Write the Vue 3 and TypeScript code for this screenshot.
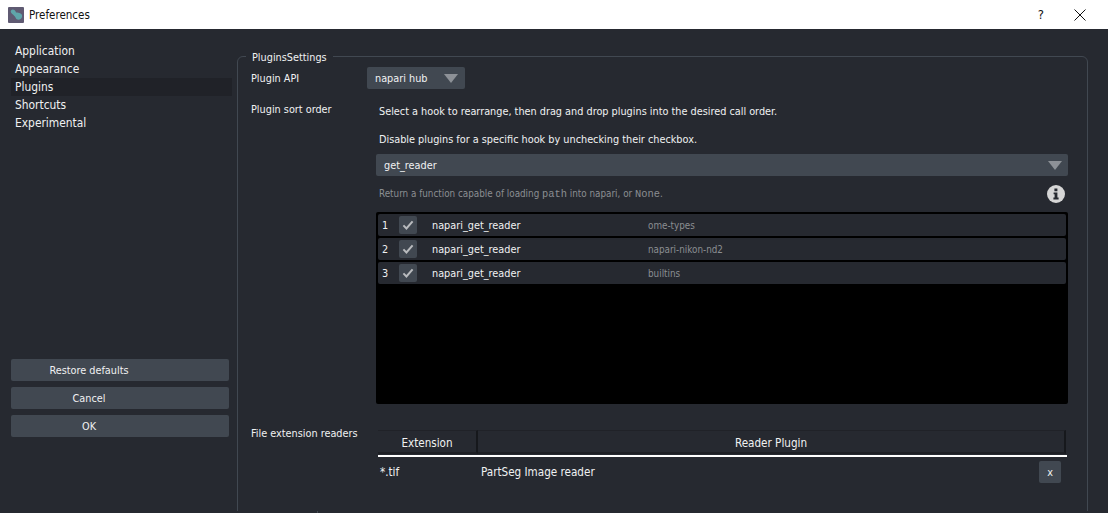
<script setup lang="ts">
const nav = ['Application', 'Appearance', 'Plugins', 'Shortcuts', 'Experimental']
const actions = ['Restore defaults', 'Cancel', 'OK']
const hooks = [
  { n: 1, plugin: 'ome-types' },
  { n: 2, plugin: 'napari-nikon-nd2' },
  { n: 3, plugin: 'builtins' }
]
</script>

<template>
  <div class="window">
    <header class="titlebar">
      <svg class="appicon" width="16" height="16" viewBox="0 0 16 16">
        <rect width="16" height="16" rx="1" fill="#5f5a72" />
        <path d="M3 3.5 C4.5 1.5 7.5 3 8 5.5 C11 5.5 15 6.5 14 10 C13 13.5 8.5 13.5 7.5 10.5 C6.5 8 1.5 6 3 3.5Z" fill="#5fa5aa" />
      </svg>
      <span class="wintitle">Preferences</span>
      <span class="help">?</span>
      <svg class="close" width="12" height="12" viewBox="0 0 12 12">
        <path d="M.5.5l11 11M11.5.5l-11 11" stroke="#111" stroke-width="1" fill="none" />
      </svg>
    </header>
    <div class="content">
      <aside class="sidebar">
        <ul class="nav">
          <li v-for="item in nav" :key="item" :class="{ active: item === 'Plugins' }">{{ item }}</li>
        </ul>
        <div class="actions">
          <button v-for="a in actions" :key="a" class="btn">{{ a }}</button>
        </div>
      </aside>
      <main class="main">
        <fieldset class="group">
          <legend>PluginsSettings</legend>
          <div class="row-api">
            <span class="label">Plugin API</span>
            <div class="combo small">
              <span class="combo-text">napari hub</span>
              <i class="arrow"></i>
            </div>
          </div>
          <div class="row-sort">
            <span class="label sort-label">Plugin sort order</span>
            <div class="sort-body">
              <p class="intro first">Select a hook to rearrange, then drag and drop plugins into the desired call order.</p>
              <p class="intro second">Disable plugins for a specific hook by unchecking their checkbox.</p>
              <div class="combo wide">
                <span class="combo-text">get_reader</span>
                <i class="arrow"></i>
              </div>
              <div class="desc">
                <span>Return a function capable of loading <code>path</code> into napari, or <code>None</code>.</span>
                <svg class="info" width="18" height="18" viewBox="0 0 18 18">
                  <circle cx="9" cy="9" r="9" fill="#d6d6d6" />
                  <path d="M7.4 3.6h3v2.6h-3zM6.6 7.4h3.8v5.2h1.2v1.8H6.4v-1.8h1.2V9.2h-1z" fill="#262930" />
                </svg>
              </div>
              <div class="list">
                <div v-for="h in hooks" :key="h.n" class="hook">
                  <span class="num">{{ h.n }}</span>
                  <span class="check">
                    <svg width="12" height="10" viewBox="0 0 14 12">
                      <path d="M1.5 6.5l3.6 3.6 7.4-8.4" stroke="#b9bbbe" stroke-width="2.4" fill="none" />
                    </svg>
                  </span>
                  <span class="hookname">napari_get_reader</span>
                  <span class="plugin">{{ h.plugin }}</span>
                </div>
              </div>
            </div>
          </div>
          <div class="row-ext">
            <span class="label ext-label">File extension readers</span>
            <div class="table">
              <div class="thead">
                <div class="th ext">Extension</div>
                <div class="th reader">Reader Plugin</div>
              </div>
              <div class="tr">
                <span class="ext-cell">*.tif</span>
                <span class="reader-cell">PartSeg Image reader</span>
                <button class="x">x</button>
              </div>
            </div>
          </div>
        </fieldset>
      </main>
      <i class="tick"></i>
    </div>
  </div>
</template>

<style>
html, body { margin: 0; background: #262930; }
</style>

<style scoped>
.window { width: 1108px; height: 513px; overflow: hidden; display: flex; flex-direction: column; background: #262930; color: #f0f1f2; font-family: "DejaVu Sans", sans-serif; font-stretch: condensed; font-size: 10.8px; line-height: 16px; }
button { font-family: inherit; font-stretch: inherit; }
.titlebar { height: 29px; flex: none; background: #fff; color: #111; display: flex; align-items: center; padding: 0 22px 0 8px; box-sizing: border-box; font-size: 11.5px; }
.appicon { flex: none; }
.wintitle { margin-left: 5px; flex: 1; }
.help { margin-right: 30px; font-size: 13px; font-weight: 500; }
.content { flex: 1; display: flex; min-height: 0; position: relative; }
.tick { position: absolute; left: 317px; top: 482px; width: 1px; height: 2px; background: #414851; }
.sidebar { width: 237px; flex: none; box-sizing: border-box; padding: 13px 0 0 11px; display: flex; flex-direction: column; }
.nav { list-style: none; margin: 0; padding: 0; width: 221px; font-size: 11.9px; }
.nav li { height: 18px; line-height: 18px; padding-left: 4px; }
.nav li.active { background: #202228; }
.actions { margin-top: 227px; display: flex; flex-direction: column; gap: 6px; width: 218px; }
.btn { height: 22px; background: #414851; color: #f0f1f2; border: 0; border-radius: 2px; font-size: 10.8px; padding: 0 62px 0 0; }
.main { flex: none; width: 851px; height: 482px; overflow: hidden; }
.group { margin: 17px 0 0; padding: 0 19px 0 13px; height: 520px; border: 1px solid #414851; border-radius: 6px; box-sizing: border-box; min-width: 0; }
.group legend { margin-left: -5px; padding: 4px 6px 0; line-height: 16px; }
.label { display: block; flex: none; width: 116px; padding-top: 2px; box-sizing: border-box; }
.row-api { display: flex; align-items: center; height: 22px; margin-top: 1px; }
.combo { background: #414851; border-radius: 2px; height: 22px; display: flex; align-items: center; justify-content: space-between; box-sizing: border-box; }
.combo.small { width: 98px; padding: 0 7px 0 8px; }
.combo.wide { padding: 0 6px 0 8px; }
.combo-text { padding-top: 1px; }
.arrow { width: 0; height: 0; border-left: 7px solid transparent; border-right: 7px solid transparent; border-top: 9px solid #8d9197; }
.row-sort { display: flex; margin-top: 12px; }
.sort-label { width: 125px; padding-top: 1px; }
.sort-body { width: 692px; }
.intro { margin: 0 0 12px 3px; line-height: 16px; }
.intro.first { margin-top: 3px; }
.intro.second { margin-bottom: 6px; }
.desc { height: 36px; display: flex; align-items: center; justify-content: space-between; padding: 0 3px; color: #8b8e92; font-size: 9.8px; }
.desc code { font-family: "Liberation Mono", monospace; font-size: 10.4px; }
.info { flex: none; }
.list { background: #000; height: 192px; padding: 2px; box-sizing: border-box; display: flex; flex-direction: column; gap: 2px; border-radius: 2px; }
.hook { height: 22px; flex: none; background: #262930; border-radius: 2px; display: flex; align-items: center; padding-left: 4px; }
.num { width: 17px; padding-top: 1px; }
.check { width: 18px; height: 18px; background: #414851; border-radius: 2px; display: flex; align-items: center; justify-content: center; }
.hookname { margin-left: 15px; width: 216px; padding-top: 1px; }
.plugin { color: #8b8e92; font-size: 9.8px; padding-top: 1px; }
.row-ext { display: flex; margin-top: 26px; }
.ext-label { width: 125px; margin-top: -4px; padding-top: 0; }
.table { width: 689px; margin-left: 2px; font-size: 11.6px; }
.thead { display: flex; height: 25px; border-bottom: 2px solid #fff; box-sizing: content-box; }
.th { background: #262930; height: 24px; line-height: 24px; text-align: center; box-sizing: border-box; border-top: 1px solid #202228; border-bottom: 2px solid #1d1f24; border-right: 2px solid #16181c; }
.th.ext { width: 100px; }
.th.reader { flex: 1; margin-right: 1px; }
.tr { display: flex; align-items: center; height: 30px; }
.ext-cell { width: 101px; margin-left: 2px; }
.reader-cell { flex: 1; }
.x { width: 22px; height: 22px; background: #414851; color: #f0f1f2; border: 0; border-radius: 2px; margin-right: 6px; font-size: 10.8px; padding: 0; }
</style>
